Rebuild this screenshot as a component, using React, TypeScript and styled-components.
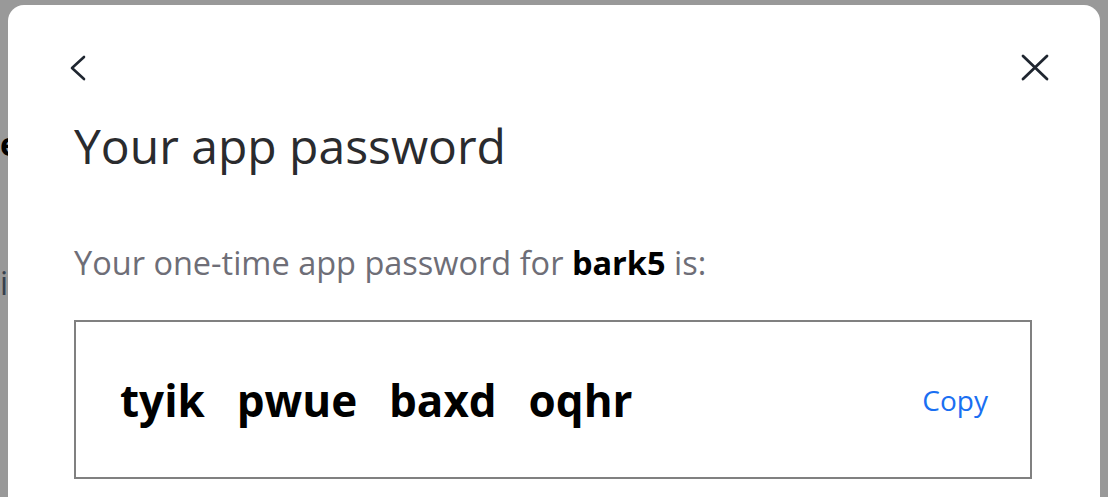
import React from "react"
import styled, { createGlobalStyle } from "styled-components"

const GlobalStyle = createGlobalStyle`
  html, body {
    margin: 0;
    padding: 0;
    background: #ffffff;
    font-family: "Open Sans", "Noto Sans", "DejaVu Sans", sans-serif;
  }
`

const Page = styled.div`
  display: flex;
  flex-direction: column;
  padding-top: 122px;
  gap: 96px;
  color: #000;
`

const PageLine = styled.div<{ $muted?: boolean }>`
  font-size: 32px;
  font-weight: ${(p) => (p.$muted ? 400 : 700)};
  color: ${(p) => (p.$muted ? "#5b6b82" : "#000")};
  white-space: nowrap;
`

const Backdrop = styled.div`
  position: fixed;
  inset: 0;
  background: rgba(0, 0, 0, 0.4);
  display: flex;
  justify-content: center;
  align-items: flex-start;
  padding: 5px 8px 0;
`

const Dialog = styled.div`
  width: 100%;
  min-height: 600px;
  background: #ffffff;
  border-radius: 16px;
  padding: 44px 68px 0 66px;
  box-sizing: border-box;
  display: flex;
  flex-direction: column;
`

const Header = styled.div`
  display: flex;
  justify-content: space-between;
  align-items: center;
  height: 38px;
  margin-left: -15px;
  margin-right: -22px;
`

const IconButton = styled.button`
  display: flex;
  align-items: center;
  justify-content: center;
  width: 38px;
  height: 38px;
  padding: 0;
  border: none;
  background: none;
  cursor: pointer;
  color: #1f2630;
`

const Title = styled.h1`
  margin: 29px 0 0;
  font-size: 48px;
  font-weight: 400;
  line-height: 60px;
  color: #2a2b2e;
`

const Subtitle = styled.p`
  margin: 66px 0 0;
  font-size: 32.5px;
  line-height: 42px;
  color: #6e6e77;

  strong {
    color: #000;
    font-weight: 700;
  }
`

const PasswordBox = styled.div`
  margin-top: 36px;
  height: 159px;
  box-sizing: border-box;
  border: 2px solid #808080;
  display: flex;
  align-items: center;
  justify-content: space-between;
  padding: 0 42px 0 44px;
`

const PasswordText = styled.span`
  font-size: 44px;
  font-weight: 700;
  color: #000;
  white-space: pre;
  word-spacing: 4.5px;
`

const CopyButton = styled.button`
  border: none;
  background: none;
  padding: 0;
  font-family: inherit;
  font-size: 28px;
  color: #1a6ff2;
  cursor: pointer;
`

const ChevronIcon = () => (
  <svg width="18" height="26" viewBox="0 0 18 26" fill="none">
    <polyline
      points="15,2 3,13 15,24"
      stroke="currentColor"
      strokeWidth="2.6"
      strokeLinecap="round"
      strokeLinejoin="round"
    />
  </svg>
)

const CloseIcon = () => (
  <svg width="28" height="28" viewBox="0 0 28 28" fill="none">
    <path
      d="M2 2 L26 25 M26 2 L2 25"
      stroke="currentColor"
      strokeWidth="2.8"
      strokeLinecap="round"
    />
  </svg>
)

const App: React.FC = () => {
  return (
    <>
      <GlobalStyle />
      <Page>
        <PageLine>e</PageLine>
        <PageLine $muted>i</PageLine>
      </Page>
      <Backdrop>
        <Dialog>
          <Header>
            <IconButton aria-label="Back">
              <ChevronIcon />
            </IconButton>
            <IconButton aria-label="Close">
              <CloseIcon />
            </IconButton>
          </Header>
          <Title>Your app password</Title>
          <Subtitle>
            Your one-time app password for <strong>bark5</strong> is:
          </Subtitle>
          <PasswordBox>
            <PasswordText>{"tyik  pwue  baxd  oqhr"}</PasswordText>
            <CopyButton>Copy</CopyButton>
          </PasswordBox>
        </Dialog>
      </Backdrop>
    </>
  )
}

export default App
